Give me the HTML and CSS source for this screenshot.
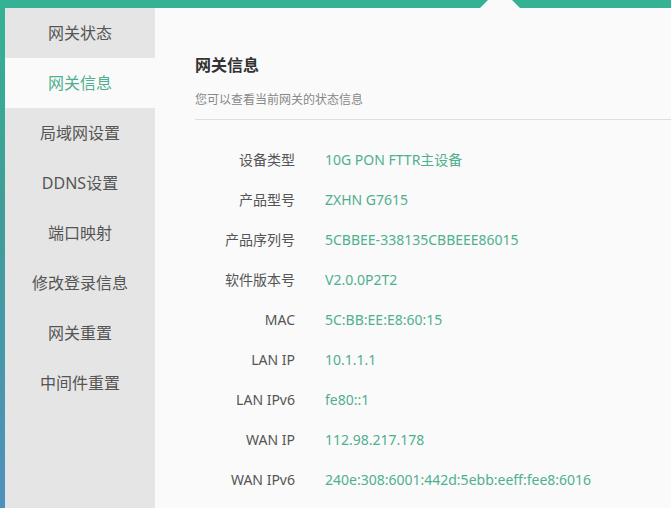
FILE: index.html
```html
<!DOCTYPE html>
<html lang="zh-CN">
<head>
  <meta charset="UTF-8">
  <title>网关信息</title>
  <link rel="stylesheet" href="styles.css">
</head>
<body>
  <div class="notch"></div>
  <div class="frame">
    <ul class="menu">
      <li>网关状态</li>
      <li class="active">网关信息</li>
      <li>局域网设置</li>
      <li>DDNS设置</li>
      <li>端口映射</li>
      <li>修改登录信息</li>
      <li>网关重置</li>
      <li>中间件重置</li>
    </ul>

    <div class="content">
      <h2 class="title">网关信息</h2>
      <p class="subtitle">您可以查看当前网关的状态信息</p>

      <div class="info">
        <div class="row"><span class="label">设备类型</span><span class="value">10G PON FTTR主设备</span></div>
        <div class="row"><span class="label">产品型号</span><span class="value">ZXHN G7615</span></div>
        <div class="row"><span class="label">产品序列号</span><span class="value">5CBBEE-338135CBBEEE86015</span></div>
        <div class="row"><span class="label">软件版本号</span><span class="value">V2.0.0P2T2</span></div>
        <div class="row"><span class="label">MAC</span><span class="value">5C:BB:EE:E8:60:15</span></div>
        <div class="row"><span class="label">LAN IP</span><span class="value">10.1.1.1</span></div>
        <div class="row"><span class="label">LAN IPv6</span><span class="value">fe80::1</span></div>
        <div class="row"><span class="label">WAN IP</span><span class="value">112.98.217.178</span></div>
        <div class="row"><span class="label">WAN IPv6</span><span class="value">240e:308:6001:442d:5ebb:eeff:fee8:6016</span></div>
      </div>
    </div>
  </div>
</body>
</html>
```

FILE: styles.css
```css
html, body {
  margin: 0;
  height: 100%;
}

body {
  background: linear-gradient(to bottom, #35b293 0%, #3f9e98 40%, #5090bd 100%);
  font-family: "Noto Sans", "Noto Sans CJK SC", sans-serif;
  padding: 8px 0 0 5px;
  box-sizing: border-box;
  overflow: hidden;
  position: relative;
}

.notch {
  position: absolute;
  top: -12px;
  left: 480px;
  width: 0;
  height: 0;
  border-left: 20px solid transparent;
  border-right: 20px solid transparent;
  border-bottom: 20px solid #fafafa;
}

.frame {
  display: flex;
  height: 100%;
}

.menu {
  list-style: none;
  margin: 0;
  padding: 0;
  width: 150px;
  background: #e5e5e5;
  flex-shrink: 0;
}

.menu li {
  height: 50px;
  line-height: 50px;
  text-align: center;
  font-size: 16px;
  color: #555;
}

.menu li.active {
  background: #fafafa;
  color: #4fb08f;
}

.content {
  flex: 1;
  background: #fafafa;
  padding: 45px 0 0 40px;
}

.title {
  margin: 0;
  font-size: 16px;
  line-height: 24px;
  font-weight: bold;
  color: #333;
}

.subtitle {
  margin: 15px 0 0;
  font-size: 12px;
  line-height: 16px;
  color: #888;
  padding-bottom: 11px;
  border-bottom: 1px solid #dedede;
}

.info {
  margin-top: 19px;
}

.row {
  display: flex;
  height: 40px;
  align-items: center;
  font-size: 14px;
}

.label {
  width: 100px;
  text-align: right;
  color: #555;
}

.value {
  margin-left: 30px;
  color: #4fb08f;
}
```
